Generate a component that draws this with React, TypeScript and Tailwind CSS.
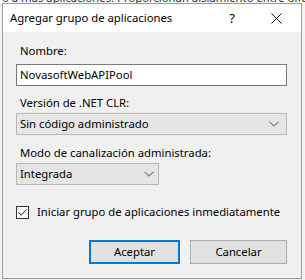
import React from "react";

const font = { fontFamily: '"Noto Sans", "Segoe UI", Arial, sans-serif' };

function Chevron() {
  return (
    <svg width="10" height="6" viewBox="0 0 10 6" className="shrink-0">
      <path d="M0.5 0.8 L5 5 L9.5 0.8" fill="none" stroke="#7a7a7a" strokeWidth="1.1" />
    </svg>
  );
}

export default function App() {
  return (
    <div
      className="w-[305px] h-[280px] bg-[#f3f3f3] overflow-hidden text-[11.3px] text-black leading-[16px] whitespace-nowrap"
      style={font}
    >
      <div className="h-[3px] overflow-hidden bg-white">
        <div className="-mt-[10px] whitespace-nowrap text-[11.3px] text-[#333] pl-[2px]">
          o a más aplicaciones. Proporcionan aislamiento entre diferentes aplicaciones.
        </div>
      </div>
      <div className="ml-[2px] w-[300px] h-[276px] border border-[#9a9a9a] flex flex-col bg-[#f0f0f0]">
        <div className="h-[28px] bg-white flex items-center pl-[7px] shrink-0">
          <span className="-mt-[1px]">Agregar grupo de aplicaciones</span>
          <span className="ml-auto text-[13px] mr-[36px]">?</span>
          <svg width="11" height="11" viewBox="0 0 11 11" className="mr-[19px]">
            <path d="M0.5 0.5 L10.5 10.5 M10.5 0.5 L0.5 10.5" stroke="#111" strokeWidth="1" />
          </svg>
        </div>
        <div className="flex flex-col pl-[13px] pr-[13px] pt-[11px]">
          <div className="pl-[4px]">Nombre:</div>
          <div className="mt-[5px] h-[22px] w-[271px] bg-white border border-[#7a7a7a] flex items-center pl-[3px]">
            NovasoftWebAPIPool
          </div>
          <div className="mt-[9px] pl-[4px]">Versión de .NET CLR:</div>
          <div className="mt-[2px] h-[22px] w-[271px] bg-[#e5e5e5] border border-[#b5b5b5] flex items-center pl-[3px] pr-[7px]">
            <span>Sin código administrado</span>
            <span className="ml-auto"><Chevron /></span>
          </div>
          <div className="mt-[10px] pl-[4px]">Modo de canalización administrada:</div>
          <div className="mt-[2px] h-[22px] w-[143px] bg-[#e5e5e5] border border-[#b5b5b5] flex items-center pl-[3px] pr-[4px]">
            <span>Integrada</span>
            <span className="ml-auto"><Chevron /></span>
          </div>
          <div className="mt-[19px] flex items-center">
            <div className="w-[13px] h-[13px] border border-[#333] bg-white flex items-center justify-center">
              <svg width="11" height="11" viewBox="0 0 11 11">
                <path d="M1.5 5.5 L4.2 8.3 L9.6 2.3" fill="none" stroke="#222" strokeWidth="1" />
              </svg>
            </div>
            <span className="ml-[8px]">Iniciar grupo de aplicaciones inmediatamente</span>
          </div>
          <div className="mt-[20px] flex justify-end pr-[1px] gap-[10px]">
            <div className="w-[91px] h-[24px] bg-[#e1e1e1] border-2 border-[#0078d7] flex items-center justify-center">
              Aceptar
            </div>
            <div className="w-[97px] h-[24px] bg-[#e1e1e1] border border-[#adadad] flex items-center justify-center">
              Cancelar
            </div>
          </div>
        </div>
      </div>
    </div>
  );
}
